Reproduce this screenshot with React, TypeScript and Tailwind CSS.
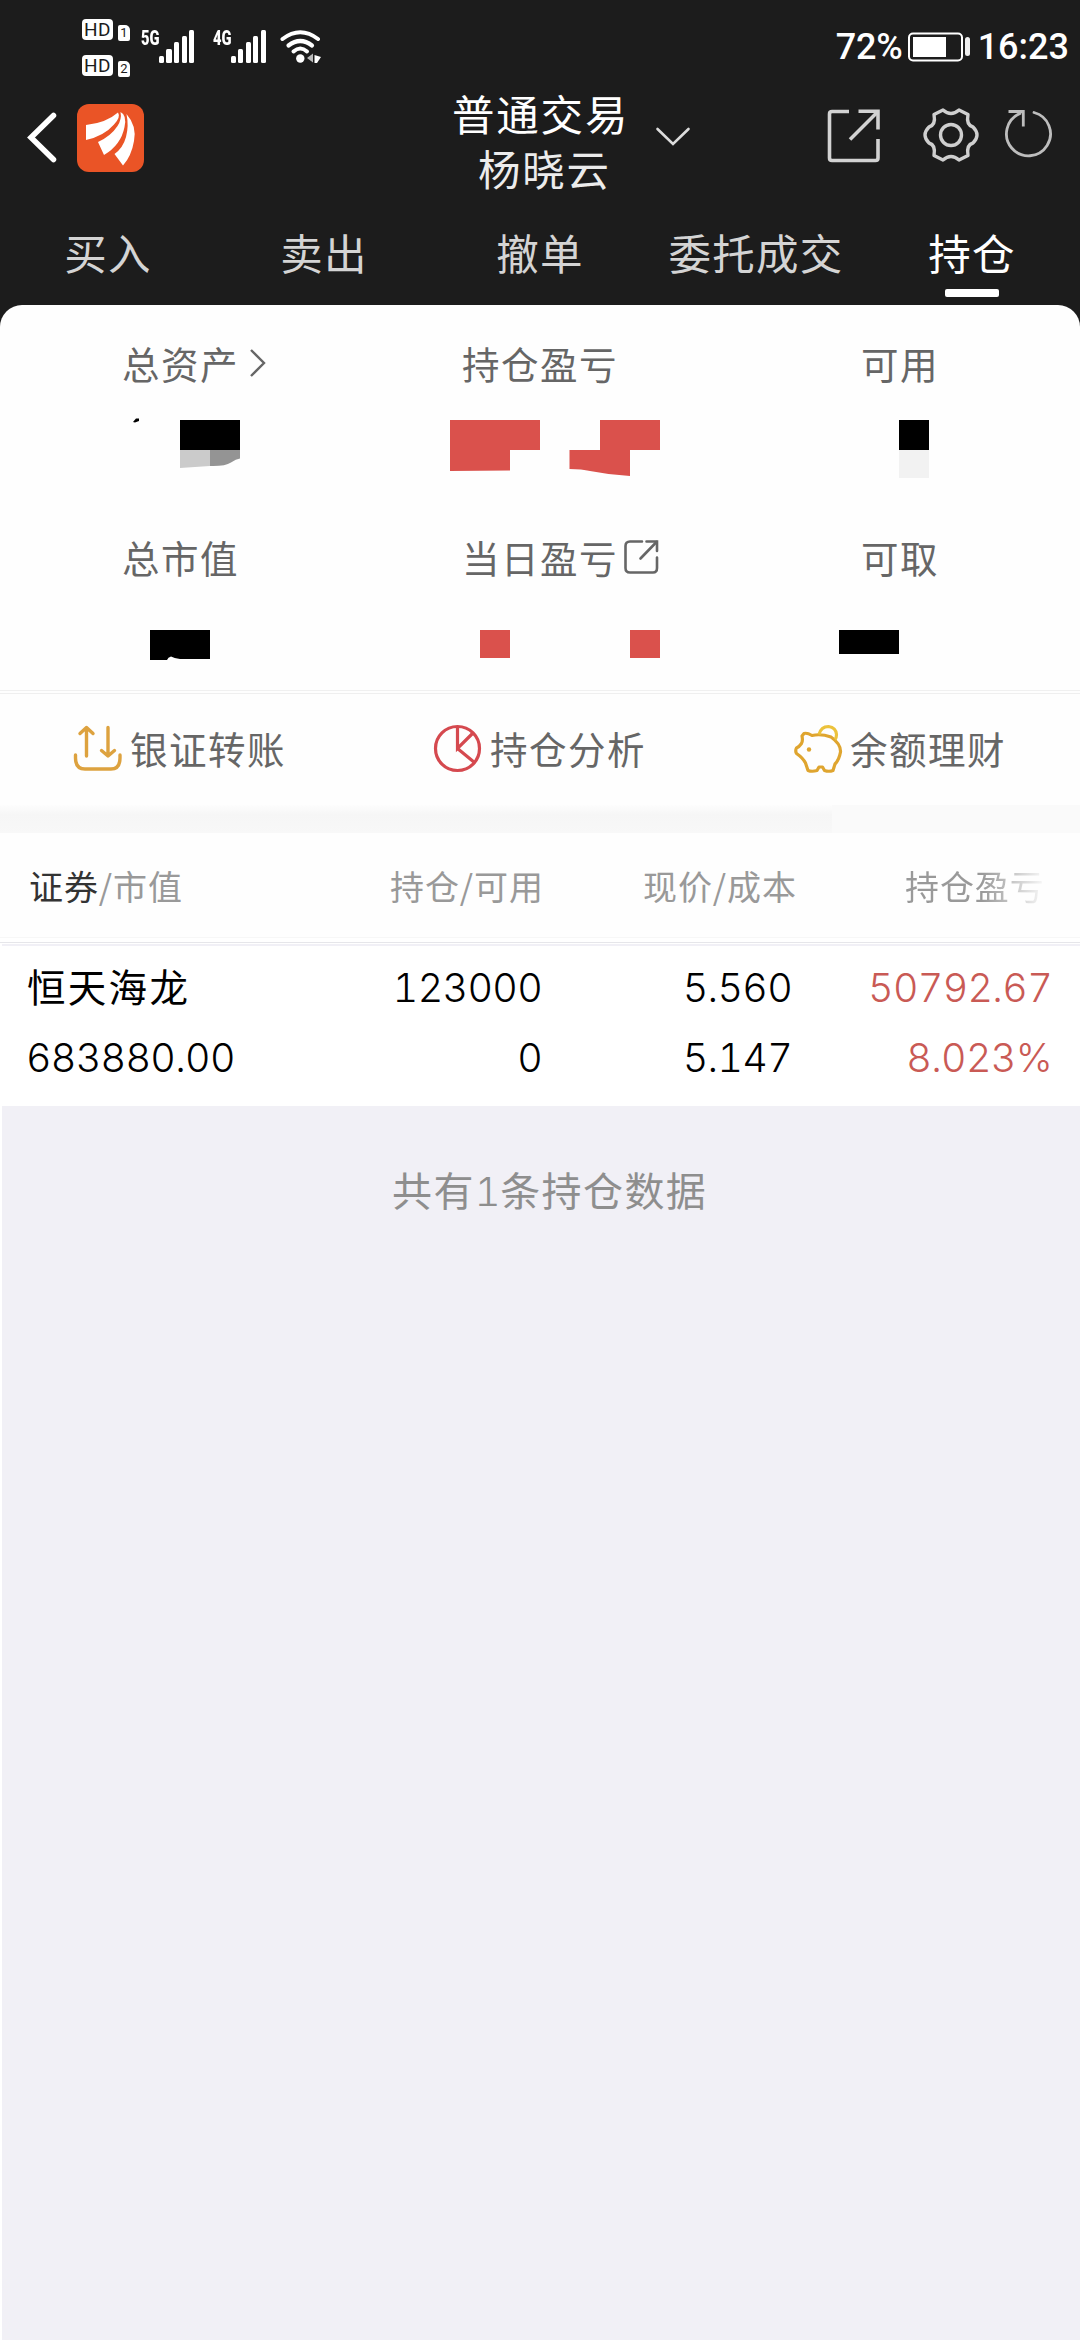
import type { ReactNode } from "react";

const CJK = "font-['Noto_Sans_CJK_SC',sans-serif]";
const MIXED = "font-['Inter','Noto_Sans_CJK_SC',sans-serif]";

function HdBadge({ n }: { n: string }) {
  return (
    <div className="flex h-[22px] items-start gap-[5px]">
      <div className="flex h-[21px] w-[31px] items-center justify-center rounded-[4px] bg-white font-['Roboto',sans-serif] text-[19px] leading-[21px] tracking-[0.5px] text-[#1c1c1c]">
        HD
      </div>
      <div className="mt-[6px] flex h-[16px] w-[12px] items-center justify-center rounded-[2px] rounded-tr-[5px] bg-white font-['Roboto',sans-serif] text-[13px] leading-[16px] text-[#1c1c1c]">
        {n}
      </div>
    </div>
  );
}

function Signal({ label }: { label: string }) {
  return (
    <div className="flex h-[33px] items-start">
      <div className="h-[16px] w-[18px]">
        <span className="block origin-left scale-x-[0.7] font-['Roboto',sans-serif] text-[21px] leading-[16px] font-black text-white">
          {label}
        </span>
      </div>
      <div className="flex h-[33px] items-end gap-[2.4px]">
        <div className="h-[7px] w-[5px] rounded-[1.5px] bg-white" />
        <div className="h-[14px] w-[5.5px] rounded-[1.5px] bg-white" />
        <div className="h-[21px] w-[5px] rounded-[1.5px] bg-white" />
        <div className="h-[27px] w-[5px] rounded-[1.5px] bg-white" />
        <div className="h-[33px] w-[5px] rounded-[1.5px] bg-white" />
      </div>
    </div>
  );
}

function Wifi() {
  return (
    <svg width="42" height="34" viewBox="0 0 42 34" fill="none" stroke="#fff">
      <path d="M2.500 10Q20.300 -3.500 38 10" strokeWidth="4" strokeLinecap="round" />
      <path d="M8.500 16.500Q20.300 7.500 32 16.500" strokeWidth="4.200" strokeLinecap="round" />
      <path d="M13.500 22.500Q20.300 16.500 27 22.500" strokeWidth="4" strokeLinecap="round" />
      <circle cx="20.300" cy="29.500" r="4.200" fill="#fff" stroke="none" />
      <path d="M33 24.500v9l-6-4.500z" fill="#bbb" stroke="none" />
      <path d="M34.500 26l6.500 2-4 6h-2.500z" fill="#fff" stroke="none" />
    </svg>
  );
}

function StatusBar() {
  return (
    <div className="flex h-[88px] items-start pl-[82px] text-white">
      <div className="flex flex-col gap-[14px] pt-[19px]">
        <HdBadge n="1" />
        <HdBadge n="2" />
      </div>
      <div className="mt-[30px] ml-[11px]">
        <Signal label="5G" />
      </div>
      <div className="mt-[30px] ml-[18.500px]">
        <Signal label="4G" />
      </div>
      <div className="mt-[29px] ml-[14px]">
        <Wifi />
      </div>
      <div className="mt-[24px] mr-[11px] ml-auto flex h-[46px] items-center font-['Roboto',sans-serif] text-[36px] leading-[46px] font-medium">
        <span className="tracking-[-0.2px]">72%</span>
        <svg className="mr-[7px] ml-[5px]" width="63" height="30" viewBox="0 0 63 30" fill="none">
          <rect x="1" y="1.500" width="53" height="27" rx="4" stroke="#fff" strokeWidth="2" />
          <rect x="5" y="5" width="33" height="20" fill="#fff" />
          <rect x="57" y="5" width="5" height="19" rx="2.500" fill="#eee" />
        </svg>
        <span>16:23</span>
      </div>
    </div>
  );
}

function NavBar() {
  return (
    <div className="flex h-[110px] items-start">
      <svg className="mt-[23px] ml-[26px]" width="32" height="52" viewBox="0 0 32 52" fill="none">
        <path d="M27.500 4.500L5 26.500L27.500 48.500" stroke="#fff" strokeWidth="5.500" strokeLinecap="round" />
      </svg>
      <svg className="mt-[16px] ml-[19px]" width="67" height="68" viewBox="0 0 67 68">
        <rect width="67" height="68" rx="12" fill="#ea5426" />
        <path d="M9 21Q29 19 41 8.500Q44 13 37 20.500Q27 32 9 36Z" fill="#fff" />
        <path d="M43.500 8Q50 11 47.500 23Q44 41 27 51L21 38Q34 32 40.500 22Q45 15 43.500 8Z" fill="#fff" />
        <path d="M49.500 10Q60 22 57 37Q54.500 52 46 61.500L37.500 50Q46 44 49 33Q52 22 49.500 10Z" fill="#fff" />
      </svg>
      <div className={`${CJK} ml-[308px] flex w-[174px] flex-col text-[42.500px] leading-[55px] tracking-[1.800px] whitespace-nowrap text-white`}>
        <span className="-mt-[3px]">普通交易</span>
        <span className="ml-[26px] text-[#ececec]">杨晓云</span>
      </div>
      <svg className="mt-[38px] ml-[29px]" width="36" height="22" viewBox="0 0 36 22" fill="none">
        <path d="M2.500 3L18 18L33.500 3" stroke="#dcdcdc" strokeWidth="2.600" strokeLinecap="round" />
      </svg>
      <svg className="mt-[21px] ml-[136px]" width="54" height="54" viewBox="0 0 54 54" fill="none" stroke="#d2d2d2" strokeWidth="3.600">
        <path d="M22 2.500H5Q2.500 2.500 2.500 5V49Q2.500 51.500 5 51.500H48.500Q51 51.500 51 49V30" />
        <path d="M31.500 2.300H51V20.500" />
        <path d="M50.500 3L23 30.500" />
      </svg>
      <svg className="mt-[19px] ml-[42px]" width="56" height="56" viewBox="-28 -28 56 56" fill="none" stroke="#cfcfcf" strokeWidth="3.400" strokeLinejoin="round">
        <circle r="10.500" />
        <path d="M-8 -25Q0 -18 8 -25L17 -20.500Q15 -10 22 -8Q26 -4 26 0Q26 4 22 8Q15 10 17 20.500L8 25Q0 18 -8 25L-17 20.500Q-15 10 -22 8Q-26 4 -26 0Q-26 -4 -22 -8Q-15 -10 -17 -20.500Z" />
      </svg>
      <svg className="mt-[21px] ml-[26px]" width="50" height="50" viewBox="0 0 50 50" fill="none" stroke="#bdbdbd" strokeWidth="2.800">
        <path d="M29 3.500A22 22 0 1 1 15 4.500" strokeLinecap="round" />
        <path d="M3.500 2.500H18.300V17.500" />
      </svg>
    </div>
  );
}

const tabs = ["买入", "卖出", "撤单", "委托成交", "持仓"];

function Tabs() {
  return (
    <div className={`${CJK} grid h-[107px] grid-cols-5 text-[42.500px] leading-[60px] tracking-[1.300px]`}>
      {tabs.map((t) => (
        <div key={t} className="flex flex-col items-center pt-[24px] whitespace-nowrap">
          {t === "持仓" ? (
            <>
              <span className="text-white">{t}</span>
              <div className="mt-[7px] h-[8px] w-[54px] rounded-[2px] bg-white" />
            </>
          ) : (
            <span className="text-[#d4d4d4]">{t}</span>
          )}
        </div>
      ))}
    </div>
  );
}

function Stat({ label, icon, children, className }: { label: string; icon?: ReactNode; children: ReactNode; className: string }) {
  return (
    <div className={className}>
      <div className="flex h-[50px] items-center">
        <span className="whitespace-nowrap">{label}</span>
        {icon}
      </div>
      {children}
    </div>
  );
}

function Summary() {
  return (
    <div className={`${CJK} h-[385px] rounded-t-[22px] bg-[#fefefe] pt-[33px] text-[37.500px] leading-[50px] tracking-[1.500px] text-[#666]`}>
      <div className="flex h-[194px]">
        <Stat
          label="总资产"
          className="ml-[122px] w-[340px]"
          icon={
            <svg className="ml-[9px]" width="20" height="32" viewBox="0 0 20 32" fill="none">
              <path d="M3 3L16 16L3 29" stroke="#666" strokeWidth="2.400" />
            </svg>
          }
        >
          <svg className="mt-[29px] ml-[10px]" width="110" height="54" viewBox="0 0 110 54">
            <path d="M1 5L4 1.500H7V4L3 5.500Z" fill="#000" />
            <rect x="48" y="3" width="60" height="30" fill="#000" />
            <path d="M48 33H78V49L48 51Z" fill="#cbcbcb" />
            <path d="M78 33H108V41.500Q104 42 99 45.500Q93 49.500 78 49Z" fill="#949494" />
          </svg>
        </Stat>
        <Stat label="持仓盈亏" className="w-[399px]">
          <svg className="mt-[32px] -ml-[12px]" width="212" height="58" viewBox="0 0 212 58" fill="#da514c">
            <path d="M0 0H90V30H60V50.500L0 51Z" />
            <path d="M150 0H210V30H180V56Q160 55 140 51Q132 49 119.500 49V30H150Z" />
          </svg>
        </Stat>
        <Stat label="可用" className="w-[150px]">
          <div className="mt-[32px] ml-[38px] h-[30px] w-[30px] bg-black" />
          <div className="ml-[38px] h-[28px] w-[30px] bg-[#f2f2f2]" />
        </Stat>
      </div>
      <div className="flex">
        <Stat label="总市值" className="ml-[122px] w-[340px]">
          <svg className="mt-[48px] ml-[28px]" width="60" height="30" viewBox="0 0 60 30">
            <path d="M0 0H60V29H30Q24 28 21 26.500Q18 27 17 30H0Z" fill="#000" />
          </svg>
        </Stat>
        <Stat
          label="当日盈亏"
          className="w-[399px]"
          icon={
            <svg className="ml-[4px]" width="38" height="36" viewBox="0 0 38 36" fill="none" stroke="#666" strokeWidth="2.600" strokeLinecap="round">
              <path d="M20 2.500H8Q3.500 2.500 3.500 7V29Q3.500 33.500 8 33.500H31Q35 33.500 35 29V18.500" />
              <path d="M24.500 2.500H35V12" />
              <path d="M34.500 3L18.500 19.500" />
            </svg>
          }
        >
          <div className="mt-[48px] ml-[18px] flex gap-[120px]">
            <div className="h-[28px] w-[30px] bg-[#da514c]" />
            <div className="h-[28px] w-[30px] bg-[#da514c]" />
          </div>
        </Stat>
        <Stat label="可取" className="w-[150px]">
          <div className="mt-[48px] -ml-[22px] h-[24px] w-[60px] bg-black" />
        </Stat>
      </div>
    </div>
  );
}

function Actions() {
  return (
    <div className={`${CJK} flex h-[115px] items-start border-t border-[#f0f0f0] bg-[#fefefe] text-[37.500px] leading-[50px] tracking-[1.500px] text-[#666]`}>
      <div className="mt-[2px] flex w-full border-t border-[#efefef] pt-[29px]">
        <div className="ml-[72px] flex w-[361px]">
          <svg className="mt-[1px]" width="51" height="50" viewBox="0 0 51 50" fill="none" stroke="#dda23f" strokeWidth="3.400" strokeLinecap="round" strokeLinejoin="round">
            <path d="M14.500 32V3.500M8 9.500L14.500 3.500L21 9.500" />
            <path d="M36 3.500V32M29.500 26.500L36 32L42.500 26.500" />
            <path d="M3.500 31V34Q3.500 45 13 45H39Q48 45 48 34V31" />
          </svg>
          <span className="ml-[7px] whitespace-nowrap">银证转账</span>
        </div>
        <div className="flex w-[360px]">
          <svg className="mt-[1px]" width="50" height="50" viewBox="0 0 50 50" fill="none" stroke="#d5494f" strokeWidth="3.200">
            <circle cx="24.500" cy="24.500" r="22" />
            <path d="M24.500 2.500V24.500L39.500 9.500M24.500 24.500L41.500 38.500" />
          </svg>
          <span className="ml-[7px] whitespace-nowrap">持仓分析</span>
        </div>
        <div className="flex">
          <svg className="mt-[1px]" width="50" height="50" viewBox="0 0 50 50" fill="none" stroke="#dfa52f" strokeWidth="3.200" strokeLinejoin="round">
            <path d="M11 9.500Q14 8.500 19 11.500Q28 9.500 38 13Q48 20 47.500 28Q46 36 42 40L40 46.500Q36 48 31.500 46.500L29.500 43H26L24 46.500Q19 48 15 46.500L12.500 39Q10 34 3.500 29.500Q2 27 3.500 24Q6 23 8.500 19.500Q10 17 9 12Z" />
            <path d="M26 10.500Q28 2.500 35.500 2.500Q43 3.500 43.500 10.500Q43.500 14 42 15.500" stroke="#ecc23c" />
            <circle cx="16" cy="25.500" r="2.200" fill="#dfa52f" stroke="none" />
          </svg>
          <span className="ml-[7px] whitespace-nowrap">余额理财</span>
        </div>
      </div>
    </div>
  );
}

function TableHeader() {
  return (
    <div className={`${CJK} flex h-[104px] items-start bg-[#fefefe] pt-[28px] text-[34px] leading-[50px] tracking-[0.900px] whitespace-nowrap text-[#999]`}>
      <div className="ml-[29px] w-[361px]">
        <span className="text-[#333]">证券</span>/市值
      </div>
      <div className="w-[253px]">持仓/可用</div>
      <div className="w-[262px]">现价/成本</div>
      <div className="bg-linear-to-r from-[#999] from-55% to-[#fafafa] bg-clip-text text-transparent">持仓盈亏</div>
    </div>
  );
}

function Holding() {
  return (
    <div className={`${MIXED} grid h-[160px] grid-cols-[302px_214px_250px_260px] grid-rows-[70px_70px] bg-white pt-[7px] pl-[26px] text-[39.500px] leading-[70px] font-light tracking-[-0.700px] whitespace-nowrap text-black tabular-nums`}>
      <div className="pl-px text-[38.500px] font-normal tracking-[2.300px]">恒天海龙</div>
      <div className="text-right">123000</div>
      <div className="text-right">5.560</div>
      <div className="text-right text-[#c95a55]">50792.67</div>
      <div>683880.00</div>
      <div className="text-right">0</div>
      <div className="text-right">5.147</div>
      <div className="text-right text-[#c95a55]">8.023%</div>
    </div>
  );
}

export default function App() {
  return (
    <div className="h-[2340px] w-[1080px] overflow-hidden bg-white">
      <div className="bg-[#1c1c1c]">
        <StatusBar />
        <NavBar />
        <Tabs />
        <Summary />
      </div>
      <Actions />
      <div className="flex h-[28px]">
        <div className="w-[832px] bg-linear-to-b from-[#fdfdfd] via-[#f6f6f6] via-35% to-[#f8f8f8]" />
        <div className="flex-1 bg-[#fafafa]" />
      </div>
      <TableHeader />
      <div className="h-[9px] border-t border-[#f7f7f7] bg-white pt-[4px]">
        <div className="h-px bg-[#e6e6ea]" />
        <div className="mt-px ml-[2px] h-[2px] bg-[#f1f0f6]" />
      </div>
      <Holding />
      <div className="ml-[2px] flex h-[1234px] bg-[#f1f0f6] pt-[61px] pl-[390px]">
        <span className={`${MIXED} h-[50px] text-[40px] leading-[50px] tracking-[1.400px] whitespace-nowrap text-[#8e8e8e] tabular-nums`}>
          共有<span className="font-light tracking-[-0.5px]">1</span>条持仓数据
        </span>
      </div>
    </div>
  );
}
